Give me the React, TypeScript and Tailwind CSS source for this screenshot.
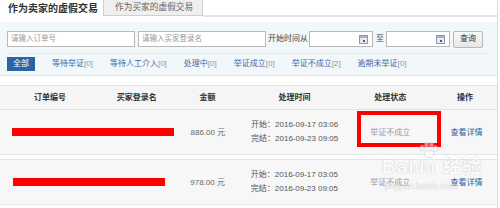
import React from "react";

const font = "font-['Liberation_Sans','Noto_Sans_CJK_SC',sans-serif]";

function CalIcon() {
  return (
    <svg width="9" height="9" viewBox="0 0 9 9" className="shrink-0">
      <rect x="0.5" y="0.5" width="8" height="8" fill="#e4ecf6" stroke="#7f9cc4" />
      <rect x="1" y="1" width="7" height="2" fill="#9db5d8" />
      <rect x="4" y="5" width="2" height="2" fill="#e02020" />
    </svg>
  );
}

function DateInput() {
  return (
    <div className="w-[64px] h-[16px] bg-white border border-[#b9b9b9] flex items-center justify-end pr-[4px]">
      <CalIcon />
    </div>
  );
}

function Filter({ label, count, hot }: { label: string; count: number; hot?: boolean }) {
  return (
    <span className="text-[#3a68ad] whitespace-nowrap">
      {label}
      <span className="text-[#8a9ab0]">[</span>
      <span className={hot ? "text-[#f07000]" : "text-[#8a9ab0]"}>{count}</span>
      <span className="text-[#8a9ab0]">]</span>
    </span>
  );
}

function Row({
  bar,
  amount,
  start,
  end,
  first,
}: {
  bar: number;
  amount: string;
  start: string;
  end: string;
  first?: boolean;
}) {
  return (
    <div
      className={
        "flex items-center bg-[#f7f7f7] border-b border-[#e6e6e6] text-[8px] " +
        (first ? "h-[45px]" : "h-[46px] mt-[4px] border-t")
      }
    >
      <div className="w-[174px] flex items-center">
        <div
          className={"h-[8px] bg-[#ff0000] " + (first ? "ml-[12px]" : "ml-[13px]")}
          style={{ width: bar }}
        />
      </div>
      <div className="w-[68px] text-center text-[#666] pt-[1px]">{amount} 元</div>
      <div className="w-[106px] flex justify-center">
        <div className="text-[#555] leading-[14px] whitespace-nowrap">
          <div>开始：{start}</div>
          <div>完结：{end}</div>
        </div>
      </div>
      <div className="w-[86px] text-center text-[#9a9a9a] pt-[2px]">举证不成立</div>
      <div className="w-[64px] text-center text-[#2f5f9f] pt-[2px] pl-[3px]">查看详情</div>
    </div>
  );
}

export default function App() {
  return (
    <div className={"w-[500px] h-[208px] overflow-hidden bg-white relative " + font}>
      <div className="w-[498px] h-full border-r border-[#dedede]">
        {/* tabs */}
        <div className="flex h-[17px]">
          <div className="w-[103px] h-[17px] pl-[8px] flex items-center text-[10px] font-bold text-[#333] whitespace-nowrap">
            作为卖家的虚假交易
          </div>
          <div className="w-[100px] h-[16px] bg-[#efefef] border border-[#cfcfcf] border-t-0 flex items-center pl-[11px] text-[8.7px] text-[#666] whitespace-nowrap">
            作为买家的虚假交易
          </div>
          <div className="flex-1 h-[17px] border-b-2 border-[#e2e2e2]" />
        </div>

        {/* filter panel */}
        <div className="mt-[5px] bg-[#f2f7fa] border-b border-[#dbe6ee] px-[7px] pt-[9px] pb-[4px]">
          <div className="flex items-center h-[16px] text-[8px] text-[#444]">
            <div className="w-[128px] h-[16px] bg-white border border-[#b9b9b9] flex items-center pl-[3px] text-[7.5px] text-[#9a9a9a] whitespace-nowrap">
              请输入订单号
            </div>
            <div className="ml-[3px] w-[128px] h-[16px] bg-white border border-[#b9b9b9] flex items-center pl-[3px] text-[7.5px] text-[#9a9a9a] whitespace-nowrap">
              请输入买家登录名
            </div>
            <span className="ml-[2px] mr-[1px] whitespace-nowrap">开始时间从</span>
            <DateInput />
            <span className="ml-[3px] mr-[2px]">至</span>
            <DateInput />
            <button className="ml-[3px] w-[30px] h-[17px] rounded-[2px] border border-[#b8b8b8] bg-gradient-to-b from-[#fafafa] to-[#e6e6e6] text-[8px] text-[#333] flex items-center justify-center">
              查询
            </button>
          </div>
          <div className="mt-[6px] h-px bg-[#e1e9ef]" />
          <div className="mt-[3px] flex items-center gap-[17px] text-[8px] h-[14px]">
            <span className="w-[28px] h-[14px] bg-[#2a63a8] text-white flex items-center justify-center">
              全部
            </span>
            <Filter label="等待举证" count={0} />
            <Filter label="等待人工介入" count={0} />
            <Filter label="处理中" count={0} />
            <Filter label="举证成立" count={0} />
            <Filter label="举证不成立" count={2} hot />
            <Filter label="逾期未举证" count={0} />
          </div>
        </div>

        {/* table header */}
        <div className="mt-[9px] h-[25px] flex items-center bg-[#f5f5f5] border-t border-b border-[#e3e3e3] text-[8px] font-bold text-[#333]">
          <div className="w-[100px] text-center">订单编号</div>
          <div className="w-[74px] text-center">买家登录名</div>
          <div className="w-[68px] text-center">金额</div>
          <div className="w-[106px] text-center">处理时间</div>
          <div className="w-[86px] text-center">处理状态</div>
          <div className="w-[64px] text-center">操作</div>
        </div>

        <Row first bar={166} amount="886.00" start="2016-09-17 03:06" end="2016-09-23 09:05" />
        <Row bar={152} amount="978.00" start="2016-09-17 03:05" end="2016-09-23 09:05" />
      </div>

      {/* annotation box */}
      <div className="absolute left-[357px] top-[111px] w-[84px] h-[36px] border-[4px] border-[#ff0000]" />

      {/* watermark */}
      <div className="absolute left-[382px] top-[156px] pointer-events-none opacity-50 text-white [text-shadow:0_0_1px_#a0a0a0,0_0_1px_#a0a0a0]">
        <svg width="22" height="16" viewBox="0 0 22 16" className="absolute left-[35px] top-[-14px]">
          <g fill="#ffffff" stroke="#b0b0b0" strokeWidth="0.8">
            <ellipse cx="5" cy="6" rx="2.2" ry="3" />
            <ellipse cx="9.5" cy="3" rx="2.2" ry="3" />
            <ellipse cx="14.5" cy="3" rx="2.2" ry="3" />
            <ellipse cx="18.5" cy="6.5" rx="2.2" ry="3" />
            <ellipse cx="12" cy="12" rx="5" ry="3.6" />
          </g>
        </svg>
        <div className="text-[19px] font-bold leading-[22px] whitespace-nowrap tracking-[1px]">
          Bai<span className="text-[16px]">du</span> 经验
        </div>
        <div className="text-[9px] leading-[10px] mt-[2px] pl-[3px] whitespace-nowrap">jingyan.baidu.com</div>
      </div>
    </div>
  );
}
